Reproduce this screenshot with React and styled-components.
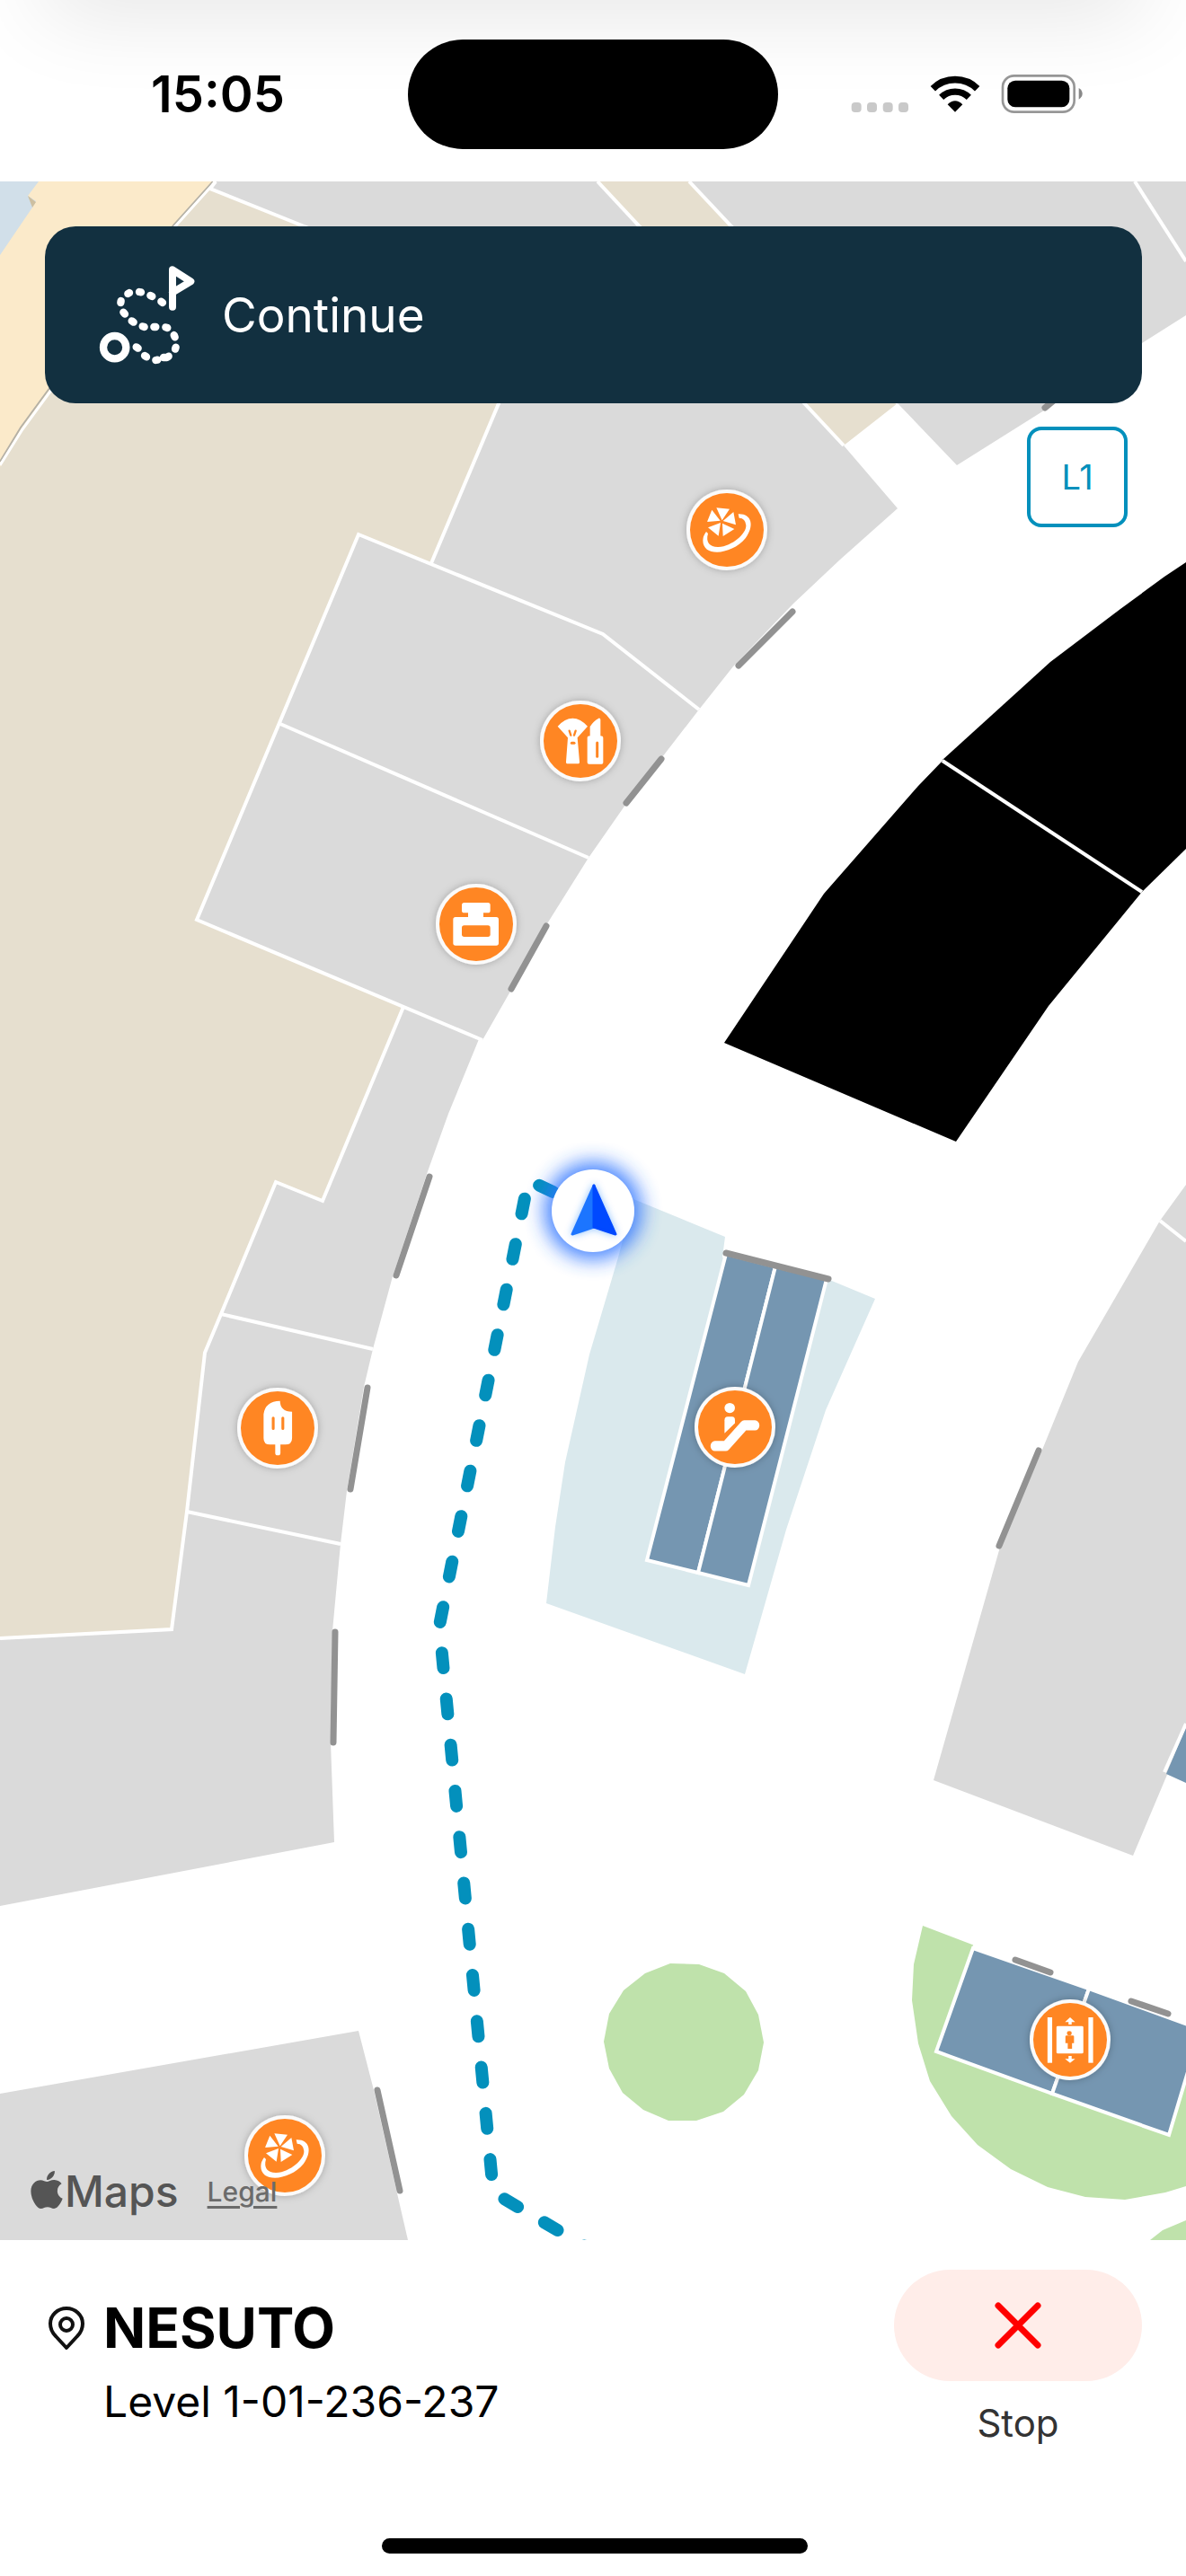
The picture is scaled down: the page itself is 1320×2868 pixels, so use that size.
import React from "react";
import styled, { createGlobalStyle } from "styled-components";
import { FaApple } from "react-icons/fa";

const color = {
  navy: "#123040",
  teal: "#0390bc",
  orange: "#ff8623",
  unit: "#dadada",
  sand: "#e6dfcf",
  door: "#929292",
  steel: "#7596b1",
  mist: "#dae9ed",
  grass: "#bfe2ab",
};

const GlobalStyle = createGlobalStyle`
  * { box-sizing: border-box; }
  body {
    margin: 0;
    background: #fff;
    color: #000;
    font-family: Inter, "Liberation Sans", sans-serif;
  }
  button { font: inherit; padding: 0; cursor: pointer; }
`;

const Screen = styled.div`
  min-height: 100vh;
  display: flex;
  flex-direction: column;
  overflow: hidden;
`;

const StatusBar = styled.header`
  position: relative;
  height: 202px;
  padding-top: 8px;
  display: grid;
  grid-template-columns: 1fr 412px 1fr;
  align-items: center;

  &::before {
    content: "";
    position: absolute;
    left: 60px;
    right: 60px;
    top: -60px;
    height: 60px;
    box-shadow: 0 0 100px 10px rgba(0, 0, 0, 0.12);
  }
`;

const Clock = styled.time`
  padding-left: 168px;
  font-size: 56px;
  line-height: 64px;
  font-weight: 600;
`;

const Island = styled.div`
  position: relative;
  height: 122px;
  border-radius: 61px;
  background: #000;
`;

const StatusIcons = styled.div`
  padding-right: 114px;
  display: flex;
  justify-content: flex-end;
`;

const MapArea = styled.main`
  position: relative;
  flex: 1;
  display: flex;
  flex-direction: column;
  align-items: stretch;
  padding: 50px 49px 24px 50px;
`;

const FloorPlan = styled.svg`
  position: absolute;
  inset: 0;
  width: 100%;
  height: 100%;
`;

const Banner = styled.section`
  position: relative;
  height: 197px;
  padding: 0 60px;
  border-radius: 34px;
  display: flex;
  align-items: center;
  gap: 30px;
  background: ${color.navy};
  color: #fff;
  font-size: 53px;
  line-height: 64px;
  font-weight: 400;
`;

const LevelButton = styled.button`
  position: relative;
  align-self: flex-end;
  width: 112px;
  height: 112px;
  margin: 26px 16px 0 0;
  border: 4px solid ${color.teal};
  border-radius: 16px;
  background: #fff;
  color: ${color.teal};
  && { font-size: 38px; }
`;

const Attribution = styled.footer`
  position: relative;
  margin-top: auto;
  margin-left: -16px;
  display: flex;
  align-items: center;
  gap: 32px;
`;

const MapsBrand = styled.span`
  display: flex;
  align-items: center;
  gap: 2px;
  color: #555;
  font-size: 48px;
  line-height: 60px;
  font-weight: 500;
`;

const AppleMark = styled(FaApple)`
  width: 36px;
  height: 48px;
  margin-bottom: 4px;
`;

const LegalLink = styled.a`
  color: #6b6b6b;
  font-size: 30px;
  line-height: 36px;
  font-weight: 500;
  text-underline-offset: 5px;
`;

const Panel = styled.section`
  height: 374px;
  padding: 33px 49px 25px 52px;
  display: flex;
  flex-direction: column;
  justify-content: space-between;
`;

const PanelRow = styled.div`
  display: flex;
  justify-content: space-between;
  align-items: flex-start;
`;

const Destination = styled.div`
  padding-top: 27px;
  display: grid;
  grid-template-columns: 44px auto;
  column-gap: 19px;
  row-gap: 14px;
  align-items: center;
`;

const PlaceName = styled.h1`
  margin: 0;
  font-size: 62px;
  line-height: 76px;
  font-weight: 700;
`;

const PlaceLevel = styled.p`
  grid-column: 2;
  margin: 0;
  font-size: 48px;
  line-height: 60px;
`;

const StopGroup = styled.div`
  width: 276px;
  display: flex;
  flex-direction: column;
  align-items: center;
  gap: 20px;
`;

const StopButton = styled.button`
  width: 100%;
  height: 124px;
  border: 0;
  border-radius: 62px;
  display: grid;
  place-items: center;
  background: #ffede9;
`;

const StopLabel = styled.label`
  color: #333;
  font-size: 42px;
  line-height: 54px;
`;

const HomeIndicator = styled.div`
  align-self: center;
  width: 474px;
  height: 17px;
  border-radius: 9px;
  background: #000;
`;

/* Store outlines, back to front */
const areas = [
  { fill: "#fbeaca", points: "0,202 245,202 195,255 55,440 0,525" },
  { fill: "#d1dfe9", points: "0,202 43,202 31,218 40,224 36,231 0,284" },
  { fill: "#cdbfa0", points: "31,218 40,225 36,231" },
  {
    fill: color.sand,
    points:
      "239,202 770,202 999,449 939,496 700,520 449,1121 400,1240 359,1337 307,1316 246,1463 228,1506 208,1683 191,1814 0,1824 0,520 25,476 55,435 195,251",
  },
  { fill: color.unit, points: "240,202 665,202 799,345 570,345 234,210" },
  { fill: color.unit, points: "767,202 1320,202 1320,351 1271,382 1162,457 1065,518 999,449" },
  {
    fill: color.unit,
    points:
      "599,345 799,345 939,496 999,566 935,623 883,672 816,742 778,790 671,706 480,627",
  },
  {
    fill: color.unit,
    points: "399,595 671,706 778,790 737,843 694,899 655,955 608,1030 569,1102 537,1158 219,1024",
  },
  {
    fill: color.unit,
    points:
      "449,1121 533,1157 499,1240 475,1307 437,1421 415,1502 405,1544 386,1660 379,1719 370,1816 368,1940 372,2051 0,2122 0,1824 191,1814 208,1683 228,1506 246,1463 307,1316 359,1337",
  },
  { fill: color.unit, points: "0,2331 399,2261 416,2327 442,2442 454,2494 0,2494" },
  {
    fill: color.unit,
    points: "1320,1319 1291,1359 1200,1516 1158,1619 1112,1726 1039,1982 1261,2066 1320,1926",
  },
  { fill: "#000", points: "1049,846 1169,737 1247,678 1296,642 1320,626 1320,945 1271,993" },
  { fill: "#000", points: "1049,847 1022,875 917,995 806,1161 1064,1271 1167,1120 1271,993" },
  {
    fill: color.mist,
    points:
      "705,1335 807,1377 804,1400 921,1424 974,1446 919,1570 875,1703 829,1864 608,1785 618,1700 629,1628 656,1508 688,1400",
  },
  {
    fill: color.grass,
    points:
      "746,2186 778,2187 806,2197 830,2217 844,2243 850,2274 844,2305 828,2332 805,2351 775,2361 744,2361 716,2349 693,2330 678,2303 672,2273 678,2242 694,2216 718,2197",
  },
  {
    fill: color.grass,
    points:
      "1027,2144 1082,2165 1320,2255 1320,2434 1297,2441 1252,2449 1208,2446 1166,2435 1125,2415 1088,2388 1059,2356 1035,2317 1022,2275 1015,2227 1017,2187",
  },
  { fill: color.grass, points: "1280,2494 1294,2483 1320,2472 1320,2494" },
  { fill: color.steel, points: "1320,1923 1320,1985 1298,1975" },
];

const walls = [
  "240,202 234,210 336,251 570,345",
  "665,202 939,496",
  "767,202 999,449",
  "1263,202 1320,291",
  "599,345 480,627",
  "778,790 671,706 399,595 219,1024 537,1158",
  "312,806 655,955",
  "449,1121 359,1337 307,1316 246,1463 228,1506 208,1683 191,1814 0,1824",
  "246,1463 415,1502",
  "208,1683 379,1719",
  "1049,847 1271,993",
  "1291,1359 1320,1382",
  "1320,1919 1296,1973",
];

const doors = [
  "882,681 822,741",
  "736,845 697,894",
  "608,1031 569,1101",
  "478,1310 441,1420",
  "409,1545 390,1658",
  "373,1817 371,1940",
  "420,2327 445,2439",
  "1180,440 1163,454",
  "1156,1615 1112,1721",
  "1130,2182 1169,2196",
  "1259,2228 1300,2242",
];

const RingGlyph = () => (
  <g transform="scale(.3333) translate(-746 -210)" fill="#fff">
    <path d="M711 136L755 140L730 178ZM768 150L776 193L733 180ZM771 207L733 231L731 188ZM718 230L683 202L725 186ZM680 183L696 143L724 179Z" />
    <path d="M784 157C828 155 840 195 808 238C764 292 666 304 666 245Q666 230 677 216L683 222C674 252 690 268 718 267C764 264 812 222 810 194Q808 171 787 170Z" />
  </g>
);

const MakeupGlyph = () => (
  <g transform="scale(.3333) translate(-257 -916)" fill="#fff">
    <path d="M181 867Q205 840 231 840T281 867L247 905L254 985Q255 992 248 992H215Q208 992 209 985L215 905Z" />
    <path d="M280 905Q280 899 289 899V868Q300 850 318 840Q324 839 324 845V899Q333 899 333 906V988Q333 993 328 993H286Q280 993 280 988Z" />
    <g stroke={color.orange} strokeLinecap="round" strokeWidth="7">
      <path d="M220 882L225 897M241 882L236 897" />
      <path d="M228 923H236" strokeWidth="9" />
      <path d="M313 922V968" strokeWidth="9" />
    </g>
  </g>
);

const PerfumeGlyph = () => (
  <g transform="scale(.3333) translate(-210 -207)" fill="#fff">
    <rect x="162" y="135" width="95" height="34" rx="8" />
    <rect x="183" y="165" width="51" height="22" />
    <rect x="133" y="183" width="152" height="95" rx="8" />
    <rect x="162" y="211" width="95" height="38" rx="8" fill={color.orange} />
  </g>
);

const IceCreamGlyph = () => (
  <g transform="scale(.4464) translate(-691 -785)" fill="#fff">
    <path d="M656 750Q660 718 697 717Q697 743 727 744V810Q727 826 710 826H672Q656 826 656 810Z" />
    <rect x="685" y="818" width="13" height="35" rx="6" />
    <path d="M680 760V786M704 760V786" stroke={color.orange} strokeWidth="7" strokeLinecap="round" />
  </g>
);

const EscalatorGlyph = () => (
  <g transform="scale(.4464 .5102) translate(-443 -567)" fill="#fff">
    <ellipse cx="430" cy="525" rx="13" ry="11" />
    <path d="M417 552Q417 544 425 544H436Q443 544 443 552V558L417 580Z" />
    <path
      d="M393 608H420L466 563H493"
      fill="none"
      stroke="#fff"
      strokeWidth="22"
      strokeLinecap="round"
      strokeLinejoin="round"
    />
  </g>
);

const LiftGlyph = () => (
  <g transform="scale(.4337 .3333) translate(-1270 -573)" fill="#fff">
    <rect x="1212" y="498" width="12" height="152" />
    <rect x="1317" y="498" width="12" height="152" />
    <rect x="1235" y="527" width="69" height="92" rx="4" />
    <path d="M1270 498L1283 514H1274V522H1266V514H1257ZM1270 650L1283 637H1274V627H1266V637H1257Z" />
    <g fill={color.orange}>
      <ellipse cx="1268" cy="551" rx="6" ry="7" />
      <path d="M1258 562Q1258 559 1261 559H1277Q1280 559 1280 562V584H1275V603H1264V584H1258Z" />
    </g>
  </g>
);

const pins = [
  { name: "Jewellery", x: 809, y: 590, Glyph: RingGlyph },
  { name: "Cosmetics", x: 646, y: 825, Glyph: MakeupGlyph },
  { name: "Perfume", x: 530, y: 1029, Glyph: PerfumeGlyph },
  { name: "Ice cream", x: 309, y: 1590, Glyph: IceCreamGlyph },
  { name: "Escalator", x: 818, y: 1589, Glyph: EscalatorGlyph },
  { name: "Lift", x: 1191, y: 2271, Glyph: LiftGlyph },
  { name: "Jewellery", x: 317, y: 2400, Glyph: RingGlyph },
];

function IndoorMap() {
  return (
    <FloorPlan viewBox="0 202 1320 2292" preserveAspectRatio="xMidYMid slice" role="img" aria-label="Indoor map">
      <defs>
        <filter id="pinShadow" x="-30%" y="-30%" width="160%" height="160%">
          <feDropShadow dx="0" dy="0" stdDeviation="4" floodColor="#000" floodOpacity=".25" />
        </filter>
        <filter id="glow" x="-60%" y="-60%" width="220%" height="220%">
          <feGaussianBlur stdDeviation="11" />
        </filter>
        <filter id="arrowGlow" x="-40%" y="-40%" width="180%" height="180%">
          <feDropShadow dx="0" dy="0" stdDeviation="4" floodColor="#1e75ff" floodOpacity=".45" />
        </filter>
      </defs>

      {areas.map((a) => (
        <polygon key={a.points} points={a.points} fill={a.fill} />
      ))}
      <polyline points="237,202 193,251 53,435 23,476 0,514" fill="none" stroke="#b5b1a6" strokeWidth="2" />
      <polyline points="240,202 195,252 55,437 25,478 0,518" fill="none" stroke="#fff" strokeWidth="3" />
      <g fill="none" stroke="#fff" strokeWidth="4">
        {walls.map((w) => (
          <polyline key={w} points={w} />
        ))}
      </g>

      <g fill={color.steel} stroke="#fff" strokeWidth="4">
        <polygon points="808,1396 863,1410 777,1751 720,1737" />
        <polygon points="863,1410 920,1424 833,1765 777,1751" />
        <polygon points="1083,2169 1212,2214 1171,2331 1042,2284" />
        <polygon points="1212,2214 1330,2257 1330,2280 1301,2377 1171,2331" />
      </g>
      <path d="M1083 2166L1330 2255" stroke="#fff" strokeWidth="5" />

      <g fill="none" stroke={color.door} strokeWidth="7" strokeLinecap="round">
        {doors.map((d) => (
          <polyline key={d} points={d} />
        ))}
        <polyline points="808,1395 922,1424" />
      </g>

      <path
        d="M660 1348L588 1314L489 1810L549 2441L670 2512"
        fill="none"
        stroke={color.teal}
        strokeWidth="14"
        strokeLinecap="round"
        strokeLinejoin="round"
        strokeDasharray="17 34.5"
        strokeDashoffset="2.3"
      />

      {pins.map(({ name, x, y, Glyph }) => (
        <g key={x} transform={`translate(${x} ${y})`}>
          <title>{name}</title>
          <circle r="45" fill="#fbfbfb" filter="url(#pinShadow)" />
          <circle r="41" fill={color.orange} />
          <Glyph />
        </g>
      ))}

      <circle cx="660" cy="1348" r="54" fill="#2f74ff" opacity=".9" filter="url(#glow)" />
      <circle cx="660" cy="1348" r="46" fill="#fff" />
      <g filter="url(#arrowGlow)" strokeLinejoin="round" strokeWidth="3">
        <path d="M661 1320L637 1374L661 1366Z" fill="#1e75ff" stroke="#1e75ff" />
        <path d="M661 1320L685 1374L661 1366Z" fill="#0048ff" stroke="#0048ff" />
      </g>
    </FloorPlan>
  );
}

const SignalIcons = () => (
  <svg width="260" height="48" viewBox="46 30 780 144" aria-label="Wi-Fi connected, battery full">
    <g fill="#c9c9c9">
      {[51, 103, 156, 208].map((x) => (
        <rect key={x} x={x} y="129" width="33" height="33" rx="12" />
      ))}
    </g>
    <g fill="none" stroke="#000">
      <path d="M323 83A106 106 0 0 1 471 83" strokeWidth="23" />
      <path d="M351 112A66 66 0 0 1 443 112" strokeWidth="22" />
    </g>
    <path d="M397 161L372 136Q397 111 422 136Z" />
    <rect x="556" y="40" width="239" height="121" rx="38" fill="none" stroke="#979797" strokeWidth="8" />
    <rect x="572" y="56" width="207" height="89" rx="26" />
    <path d="M810 81Q822 88 822 100T810 119Z" fill="#888" />
  </svg>
);

const RouteIcon = () => (
  <svg width="107" height="110" viewBox="90 80 321 330" fill="none" stroke="#fff" aria-hidden="true">
    <circle cx="143" cy="352" r="38" strokeWidth="25" />
    <path d="M336 217V93L397 132L336 169" strokeWidth="24" strokeLinecap="round" strokeLinejoin="round" />
    <g strokeWidth="25" strokeLinecap="round">
      <path d="M303 203L298 199M268 182L262 179M231 168L225 167M192 170L187 173M164 197L163 203M172 235L177 241M200 264L206 268M236 282L242 284M274 284L280 284M313 285L319 287M341 311L344 318M347 352L345 358M323 382L317 386M306 386L310 386M286 394L280 395M249 384L243 380M221 355L215 351" />
    </g>
  </svg>
);

export default function App() {
  return (
    <>
      <GlobalStyle />
      <Screen>
        <StatusBar>
          <Clock>15:05</Clock>
          <Island />
          <StatusIcons>
            <SignalIcons />
          </StatusIcons>
        </StatusBar>

        <MapArea>
          <IndoorMap />
          <Banner>
            <RouteIcon />
            <span>Continue</span>
          </Banner>
          <LevelButton type="button">L1</LevelButton>
          <Attribution>
            <MapsBrand>
              <AppleMark aria-hidden="true" />
              Maps
            </MapsBrand>
            <LegalLink href="#legal">Legal</LegalLink>
          </Attribution>
        </MapArea>

        <Panel>
          <PanelRow>
            <Destination>
              <svg width="44" height="50" viewBox="0 0 44 50" fill="none" stroke="#111" strokeWidth="4" aria-hidden="true">
                <path d="M22 47L10 34C5 29 4 24 4 20A18 17 0 0 1 40 20C40 24 39 29 34 34Z" strokeLinejoin="round" />
                <circle cx="22" cy="21" r="7" />
              </svg>
              <PlaceName>NESUTO</PlaceName>
              <PlaceLevel>Level 1-01-236-237</PlaceLevel>
            </Destination>
            <StopGroup>
              <StopButton id="stop" type="button">
                <svg width="52" height="52" viewBox="0 0 52 52" stroke="#f00" strokeWidth="7" strokeLinecap="round" aria-hidden="true">
                  <path d="M4 4L48 48M48 4L4 48" />
                </svg>
              </StopButton>
              <StopLabel htmlFor="stop">Stop</StopLabel>
            </StopGroup>
          </PanelRow>
          <HomeIndicator />
        </Panel>
      </Screen>
    </>
  );
}
